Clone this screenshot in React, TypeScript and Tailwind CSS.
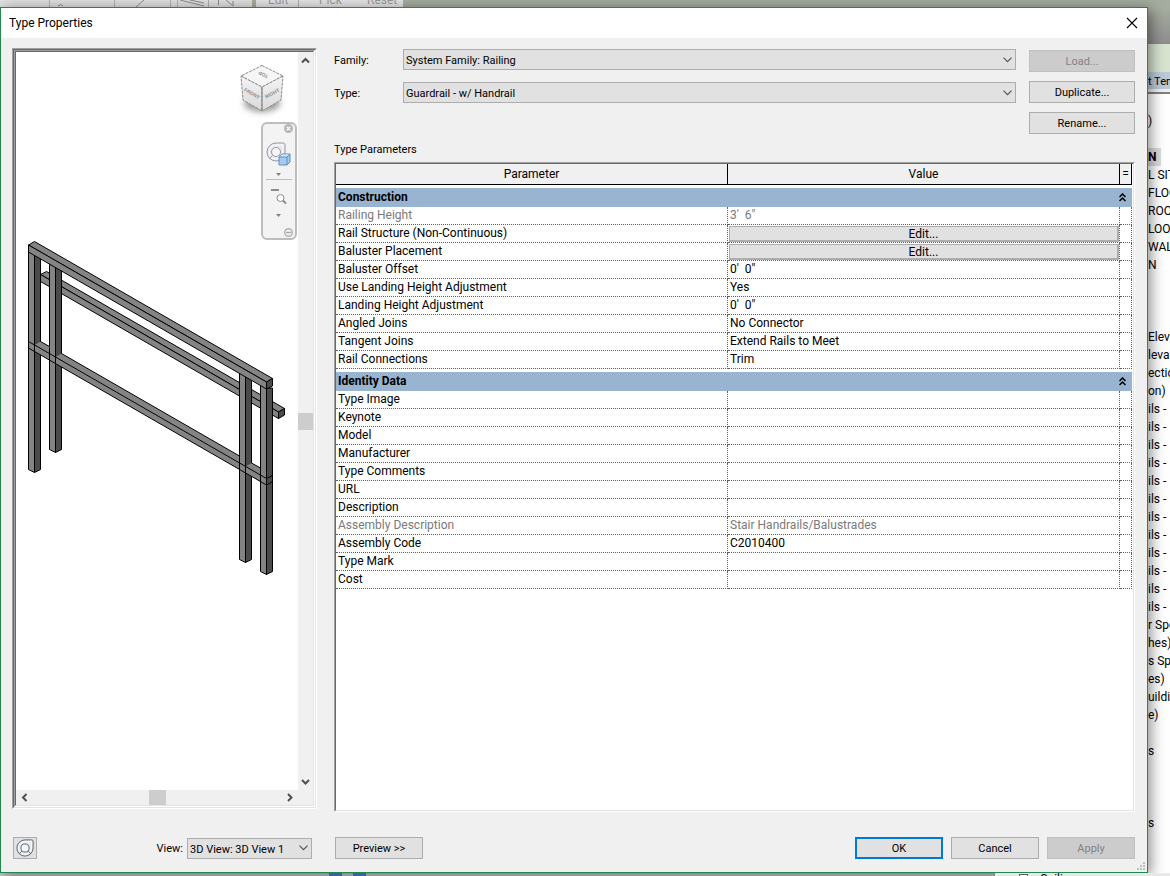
import { useState, type ReactNode } from "react";

type Param = { name: string; value?: string; edit?: boolean; muted?: boolean };

const groups: { title: string; params: Param[] }[] = [
  {
    title: "Construction",
    params: [
      { name: "Railing Height", value: "3'  6\"", muted: true },
      { name: "Rail Structure (Non-Continuous)", edit: true },
      { name: "Baluster Placement", edit: true },
      { name: "Baluster Offset", value: "0'  0\"" },
      { name: "Use Landing Height Adjustment", value: "Yes" },
      { name: "Landing Height Adjustment", value: "0'  0\"" },
      { name: "Angled Joins", value: "No Connector" },
      { name: "Tangent Joins", value: "Extend Rails to Meet" },
      { name: "Rail Connections", value: "Trim" },
    ],
  },
  {
    title: "Identity Data",
    params: [
      { name: "Type Image" },
      { name: "Keynote" },
      { name: "Model" },
      { name: "Manufacturer" },
      { name: "Type Comments" },
      { name: "URL" },
      { name: "Description" },
      { name: "Assembly Description", value: "Stair Handrails/Balustrades", muted: true },
      { name: "Assembly Code", value: "C2010400" },
      { name: "Type Mark" },
      { name: "Cost" },
    ],
  },
];

// Project browser lines, one per 18px row
const browserRows = [
  ")", "", "N", "L SITE", "FLOO", "ROO", "LOO", "WALL", "N", "", "", "",
  "Elev", "leva", "ectio", "on)",
  "ils -", "ils -", "ils -", "ils -", "ils -", "ils -", "ils -", "ils -", "ils -", "ils -", "ils -", "ils -",
  "r Spe", "hes)", "s Spe", "es)", "uildin", "e)", "", "s", "", "", "", "s",
];

function Button({ children, disabled, primary, className = "w-[88px]" }: {
  children: ReactNode;
  disabled?: boolean;
  primary?: boolean;
  className?: string;
}) {
  const look = disabled
    ? "border border-[#bfbfbf] bg-[#cccccc] text-[#838383]"
    : primary
      ? "border-2 border-[#0078d7] bg-[#e1e1e1]"
      : "border border-[#adadad] bg-[#e1e1e1]";
  return (
    <button type="button" disabled={disabled} className={`flex h-[22px] items-center justify-center pt-0.5 ${look} ${className}`}>
      {children}
    </button>
  );
}

function Select({ id, value }: { id: string; value: string }) {
  return (
    <div className="grid flex-1 items-center">
      <select id={id} className="col-start-1 row-start-1 h-[21px] w-full appearance-none border border-[#adadad] bg-[#e1e1e1] pt-[3px] pl-0.5">
        <option>{value}</option>
      </select>
      <svg viewBox="0 0 9 6" className="pointer-events-none col-start-1 row-start-1 mr-1 h-[6px] w-[9px] justify-self-end">
        <path d="M.5.7l4 4 4-4" fill="none" stroke="#505050" strokeWidth="1.1" />
      </svg>
    </div>
  );
}

function Arrow({ d, label, className }: { d: string; label: string; className: string }) {
  return (
    <button type="button" aria-label={label} className={`flex items-center justify-center ${className}`}>
      <svg viewBox="0 0 9 9" className="size-[9px]">
        <path d={d} fill="none" stroke="#505050" strokeWidth="2" />
      </svg>
    </button>
  );
}

function Wheel({ stroke }: { stroke: string }) {
  return (
    <g stroke={stroke} fill="#e4e7ee">
      <path d="M10 1h7.500q1.500 0 1.500 1.500V10a9 9 0 1 1-9-9z" />
      <path d="M10 3h7v7a7 7 0 1 1-7-7z" stroke="#ffffff" fill="none" />
      <circle cx="10" cy="10" r="4.500" fill="#f6f6f6" />
      <path d="M6.500 13.500l-3 3M13.500 13.500l3 3" fill="none" />
    </g>
  );
}

function RailingView() {
  return (
    <svg viewBox="16 52 282 738" className="block w-full">
      <defs>
        <filter id="soft" x="-50%" y="-50%" width="200%" height="200%">
          <feGaussianBlur stdDeviation="3" />
        </filter>
        <linearGradient id="face" x1="0" y1="0" x2="0" y2="1">
          <stop offset="0" stopColor="#f4f4f4" />
          <stop offset="1" stopColor="#d9d9d9" />
        </linearGradient>
      </defs>

      {/* View cube */}
      <ellipse cx="262" cy="103" rx="18" ry="9" fill="#999999" filter="url(#soft)" />
      <g stroke="#8c8c8c" strokeWidth="1">
        <path d="M262 65.500l21 10.500-21 11-21-11z" fill="#f6f6f6" strokeDasharray="3 1" />
        <path d="M241 76l21 11v24l-19-11z" fill="url(#face)" strokeDasharray="3 1" />
        <path d="M283 76l-21 11v24l19-11z" fill="url(#face)" strokeDasharray="3 1" />
        <path d="M262 87v24" />
      </g>
      <g fill="#8a8a8a" fontSize="5" fontWeight="700" textAnchor="middle" fontFamily="Liberation Sans, sans-serif">
        <text transform="translate(251 95) rotate(29)">FRONT</text>
        <text transform="translate(273 95) rotate(-29)">RIGHT</text>
        <text transform="translate(264 73) rotate(207)">TOP</text>
      </g>

      <g stroke="#000000" strokeWidth="1" fill="#848484">
        {/* Handrail behind the posts */}
        <path d="M40.500 274.500l6-3 238 137-6 3.500z" />
        <path d="M40.500 274.500l238 137.500v6.500L40.500 281.500z" />
        <path d="M278.500 412l6-3.500v6.500l-6 3.500z" fill="#4a4a4a" />

        {/* Posts */}
        <path d="M28.500 250h6v222.500l-6-3z" />
        <path d="M34.500 250h6v219.500l-6 3z" fill="#4a4a4a" />
        <path d="M49.500 262h6v190.500l-6-3z" />
        <path d="M55.500 265h6v184.500l-6 3z" fill="#4a4a4a" />
        <path d="M239.500 370h6v192.500l-6-3z" />
        <path d="M245.500 374h6v185.500l-6 3z" fill="#4a4a4a" />
        <path d="M260.500 384h6v190.500l-6-3z" />
        <path d="M266.500 388h6v183.500l-6 3z" fill="#4a4a4a" />

        {/* Lower rail */}
        <g stroke="none">
          <path d="M34.500 345l6-3.500 9 5v7zM55.500 357l6-3.500 178 102.500v7zM245.500 466.500l6-3.500 9 5v7z" />
          <path d="M28.500 341.500l238 137v6.500l-238-137z" />
        </g>
        <path d="M28.500 341.500l238 137 6-3M28.500 348l238 137 6-3.500" fill="none" />
        <path d="M40.500 341.500l9 5M61.500 353.500l178 102.500M251.500 463l9 5" fill="none" />
        <path d="M28.500 340v10M34.500 340v12M49.500 348v16M55.500 350v20M239.500 456v16M245.500 460v18M260.500 465v20M266.500 474v14" fill="none" />

        {/* Top rail */}
        <path d="M28.500 245l6-3.500 238 137-6 3.500z" />
        <path d="M28.500 245l238 137v7L28.500 252z" />
        <path d="M266.500 382l6-3.500v7.500l-6 3z" fill="#4a4a4a" />
      </g>
    </svg>
  );
}

function NavigationBar() {
  return (
    <div className="absolute top-[70px] right-px flex h-[118px] w-9 flex-col rounded-md border-2 border-[#bdbdbd] bg-[#f3f3f3] pr-0.5 pl-[3px]">
      <button type="button" aria-label="Close navigation bar" className="self-end">
        <svg viewBox="0 0 9 9" className="size-[9px]">
          <circle cx="4.500" cy="4.500" r="4.500" fill="#b5b5b5" />
          <path d="M2.700 2.700l3.600 3.600M6.300 2.700L2.700 6.300" stroke="#ffffff" strokeWidth="1.200" />
        </svg>
      </button>
      <button type="button" aria-label="Steering wheel" className="mt-[9px] flex flex-col items-start">
        <svg viewBox="0 0 26 38" className="h-[38px] w-[26px]">
          <Wheel stroke="#9a9aa2" />
          <path d="M13 15l3-3h8v8l-3 3h-8z" fill="#a9cbea" stroke="#5b8fc4" />
          <path d="M14 14.500l2-2h7.500l-2.500 2.500h-8z" fill="#d6e8f7" />
          <path d="M13 15h8v8M21 15l3-3" fill="none" stroke="#5b8fc4" />
          <path d="M10 31h5l-2.500 3z" fill="#808080" />
          <path d="M0 37.500h26" stroke="#bdbdbd" />
        </svg>
      </button>
      <button type="button" aria-label="Zoom" className="mt-2 flex flex-col items-start">
        <svg viewBox="0 0 26 32" className="h-8 w-[26px]">
          <path d="M5 2h8" stroke="#8c8c8c" strokeWidth="2" />
          <circle cx="14.500" cy="10" r="3.500" fill="#ffffff" stroke="#8c8c8c" />
          <path d="M17 12.500l3 3" stroke="#8c8c8c" strokeWidth="2" />
          <path d="M10 26h5l-2.500 3z" fill="#808080" />
        </svg>
      </button>
      <button type="button" aria-label="Navigation bar options" className="mt-auto mb-px self-end">
        <svg viewBox="0 0 9 9" className="size-[9px]">
          <circle cx="4.500" cy="4.500" r="3.800" fill="#f3f3f3" stroke="#b0b0b0" strokeWidth="1.400" />
          <path d="M2 3.800h5v1.400H2z" fill="#a8a8a8" />
        </svg>
      </button>
    </div>
  );
}

function Preview() {
  return (
    <div className="mb-[3px] w-[305px] shrink-0 border border-t-[#a0a0a0] border-r-white border-b-white border-l-[#a0a0a0]">
      <div className="h-full border border-t-[#696969] border-r-[#e3e3e3] border-b-[#e3e3e3] border-l-[#696969]">
        <div className="h-full border border-t-[#a0a0a0] border-r-white border-b-white border-l-[#a0a0a0]">
          <div className="grid h-full grid-cols-[1fr_15px] grid-rows-[1fr_15px] border border-t-[#696969] border-r-[#e3e3e3] border-b-[#e3e3e3] border-l-[#696969] bg-[#f0f0f0]">
            <div className="relative bg-white">
              <RailingView />
              <NavigationBar />
            </div>
            <div className="flex flex-col items-center justify-between">
              <Arrow label="Scroll up" d="M1 6.500L4.500 3 8 6.500" className="h-[17px] w-full" />
              <div className="h-[17px] w-full bg-[#cdcdcd]" />
              <Arrow label="Scroll down" d="M1 3l3.500 3.500L8 3" className="h-[17px] w-full" />
            </div>
            <div className="flex items-center justify-between">
              <Arrow label="Scroll left" d="M6.500 1L3 4.500 6.500 8" className="h-full w-[17px]" />
              <div className="h-full w-[17px] bg-[#cdcdcd]" />
              <Arrow label="Scroll right" d="M3 1l3.500 3.500L3 8" className="h-full w-[17px]" />
            </div>
          </div>
        </div>
      </div>
    </div>
  );
}

function ParameterTable() {
  const [closed, setClosed] = useState<string[]>([]);
  const toggle = (title: string) =>
    setClosed(closed.includes(title) ? closed.filter((t) => t !== title) : [...closed, title]);

  return (
    <div className="flex-1 border border-t-[#a0a0a0] border-r-white border-b-white border-l-[#a0a0a0] text-[12px]">
      <div className="h-full border border-t-[#696969] border-r-[#e3e3e3] border-b-[#e3e3e3] border-l-[#696969] bg-white pr-px">
        <table className="w-full table-fixed border-separate border-spacing-0 text-left leading-4">
          <colgroup>
            <col />
            <col />
            <col className="w-3" />
          </colgroup>
          <thead>
            <tr className="h-[21px] bg-[#f0f0f0]">
              <th className="border-r border-b border-black p-0 text-center font-normal">Parameter</th>
              <th className="border-r border-b border-black p-0 text-center font-normal">Value</th>
              <th className="border-r border-b border-black p-0 text-center font-normal">=</th>
            </tr>
          </thead>
          {groups.map((group) => (
            <tbody key={group.title}>
              <tr className="h-[22px]">
                <th colSpan={3} className="border-t-[3px] border-white bg-[#99b4d1] pt-0 pr-1.5 pb-px pl-0.5 font-bold">
                  <button type="button" onClick={() => toggle(group.title)} className="flex w-full items-center justify-between">
                    {group.title}
                    <svg viewBox="0 0 7 9" className="h-[9px] w-[7px]">
                      <path d="M.5 4l3-3 3 3M.5 8l3-3 3 3" fill="none" stroke="#000000" strokeWidth="1.500" />
                    </svg>
                  </button>
                </th>
              </tr>
              {!closed.includes(group.title) &&
                group.params.map((p) => (
                  <tr key={p.name} className={p.muted ? "h-[18px] text-[#7a7a7a]" : "h-[18px]"}>
                    <td className="border-r border-b border-dotted border-[#606060] pt-0 pr-0 pb-px pl-0.5">{p.name}</td>
                    {p.edit ? (
                      <td className="border-r border-b border-dotted border-[#606060] p-0">
                        <button type="button" className="mx-px mt-px flex h-4 w-[calc(100%-1px)] items-center justify-center border border-r-2 border-b-2 border-[#adadad] bg-[#e1e1e1]">
                          Edit...
                        </button>
                      </td>
                    ) : (
                      <td className="border-r border-b border-dotted border-[#606060] pt-0 pr-0 pb-px pl-0.5 whitespace-pre">{p.value}</td>
                    )}
                    <td className="border-r border-b border-dotted border-[#606060] p-0" />
                  </tr>
                ))}
            </tbody>
          ))}
        </table>
      </div>
    </div>
  );
}

function ProjectBrowser() {
  return (
    <aside className="w-[22px] shrink-0 overflow-hidden bg-white text-[12px] leading-[18px] whitespace-nowrap">
      <div className="h-[37px] border-b border-[#4fc31a] bg-linear-to-b from-[#a5ada0] to-[#8f8f8f]" />
      <div className="h-7 bg-[#d8e3d0]" />
      <div className="h-[17px] bg-[#bccad9] pt-px text-[11px]">t Tem</div>
      <div className="mb-[18px] h-[5px] border-b-2 border-[#808080] bg-[#f0f0f0]" />
      {browserRows.map((row, i) => (
        <div key={i} className={i === 2 ? "h-[18px] w-[13px] bg-[#dcdcdc] font-bold" : "h-[18px]"}>
          {row}
        </div>
      ))}
    </aside>
  );
}

export default function App() {
  return (
    <div className="flex min-h-screen flex-col overflow-hidden bg-[#d4d4d4] font-['Roboto','Noto_Sans',sans-serif] text-[11px] text-black">
      {/* Ribbon edge above the dialog */}
      <div className="flex h-[7px] items-end overflow-hidden bg-[#a5ada0] text-[12px] leading-[14px] text-[#9a9a9a]">
        <div className="flex h-full w-[252px] bg-[#e2e2e2]">
          <svg viewBox="0 0 252 7" className="h-[7px] w-[252px]">
            <path d="M49.500 0v7M114.500 0v7M170.500 0v7M177.500 0v7M208.500 0v7" stroke="#b0b0b0" />
            <path d="M136 7l8-7M180 0l24 6M190 0l14 3M218.500 0v5M226 0l7 6v-5M58 6q3-3 5 0" fill="none" stroke="#8c8c8c" />
          </svg>
        </div>
        <div className="ml-1 flex h-full w-[147px] items-end bg-[#e6e6e6]">
          <span className="w-[42px] pl-3">Edit</span>
          <span className="w-[69px] border-l border-[#b0b0b0] pl-5">Pick</span>
          <span>Reset</span>
        </div>
      </div>

      <div className="flex flex-1">
        <section className="relative z-10 flex flex-1 flex-col border border-[#1f8a4c] bg-[#f0f0f0] shadow-[2px_3px_14px_rgba(0,0,0,0.5)]">
          <header className="flex h-[30px] items-center justify-between bg-white pr-[9px] pl-2">
            <h1 className="text-[12px]">Type Properties</h1>
            <button type="button" aria-label="Close">
              <svg viewBox="0 0 12 12" className="size-3">
                <path d="M1 1l10 10M11 1L1 11" stroke="#000000" strokeWidth="1.100" />
              </svg>
            </button>
          </header>

          <main className="flex flex-1 gap-[17px] pt-2.5 pr-3 pl-[11px]">
            <Preview />
            <div className="flex flex-1 flex-col">
              <div className="flex gap-[13px]">
                <div className="flex flex-1 flex-col gap-3 pt-px">
                  <div className="flex items-center">
                    <label htmlFor="family" className="w-[69px] pt-[3px]">Family:</label>
                    <Select id="family" value="System Family: Railing" />
                  </div>
                  <div className="flex items-center">
                    <label htmlFor="type" className="w-[69px] pt-[3px]">Type:</label>
                    <Select id="type" value="Guardrail - w/ Handrail" />
                  </div>
                </div>
                <div className="flex flex-col gap-[9px] pt-0.5">
                  <Button disabled className="w-[106px]">Load...</Button>
                  <Button className="w-[106px]">Duplicate...</Button>
                  <Button className="w-[106px]">Rename...</Button>
                </div>
              </div>
              <h2 className="flex h-7 items-center pt-1">Type Parameters</h2>
              <ParameterTable />
            </div>
          </main>

          <footer className="flex h-[60px] items-start gap-2 pt-[25px] pr-3 pl-3">
            <div className="mr-[14px] flex w-[299px] items-center">
              <button type="button" aria-label="Steering wheels" className="flex h-[22px] w-6 items-center justify-center border border-[#adadad] bg-[#e1e1e1]">
                <svg viewBox="0 0 20 20" className="size-[18px]">
                  <Wheel stroke="#555e6b" />
                </svg>
              </button>
              <label htmlFor="view" className="ml-auto pt-0.5 pr-1">View:</label>
              <div className="flex w-[125px]">
                <Select id="view" value="3D View: 3D View 1" />
              </div>
            </div>
            <div className="flex flex-1 justify-between pl-px">
              <Button>Preview &gt;&gt;</Button>
              <div className="flex gap-2">
                <Button primary>OK</Button>
                <Button>Cancel</Button>
                <Button disabled>Apply</Button>
              </div>
            </div>
          </footer>

          {/* Resize grip */}
          <svg viewBox="0 0 8 8" className="absolute right-0.5 bottom-0.5 size-2">
            <path d="M6 0h2v2H6zM3 3h2v2H3zM6 3h2v2H6zM0 6h2v2H0zM3 6h2v2H3zM6 6h2v2H6z" fill="#bfbfbf" />
          </svg>
        </section>
        <ProjectBrowser />
      </div>

      {/* Drawing area below the dialog */}
      <div className="relative z-20 flex h-[3px] overflow-hidden pl-[329px] text-[12px] leading-3">
        <div className="h-full w-[13px] bg-[#3f5fae]" />
        <div className="ml-[11px] h-full w-[13px] bg-[#3f5fae]" />
        <div className="ml-auto flex w-[176px] border-l border-[#808080] bg-[#e8e8e8] pl-6">
          <div className="mt-px h-[9px] w-[9px] border border-[#606060] bg-white" />
          <span className="ml-3">Ceilings</span>
        </div>
      </div>
    </div>
  );
}
